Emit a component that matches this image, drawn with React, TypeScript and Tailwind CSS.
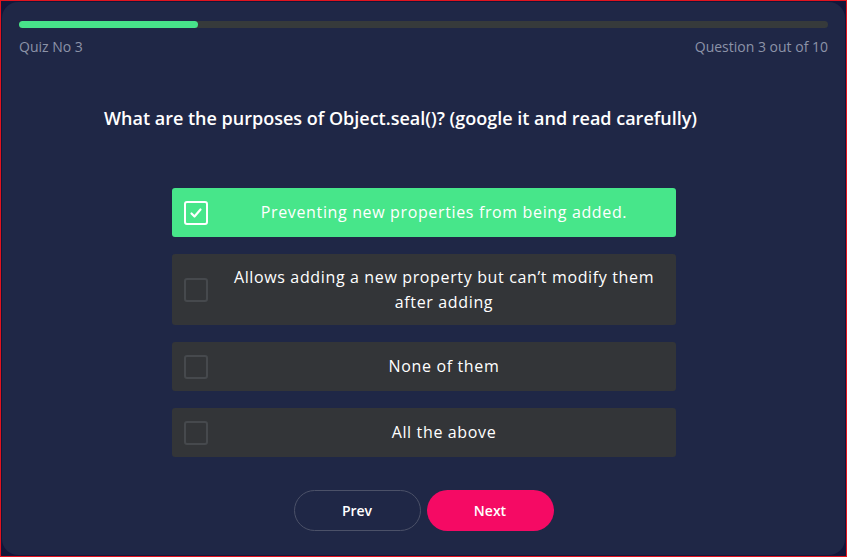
import React from 'react'

const options = [
  { text: 'Preventing new properties from being added.', checked: true },
  { text: 'Allows adding a new property but can\u2019t modify them after adding', checked: false },
  { text: 'None of them', checked: false },
  { text: 'All the above', checked: false },
]

function Checkbox({ checked }: { checked: boolean }) {
  if (checked) {
    return (
      <span className="flex h-6 w-6 shrink-0 items-center justify-center rounded-[3px] border-2 border-white">
        <svg width="14" height="14" viewBox="0 0 14 14" fill="none">
          <path d="M2.5 7.5 L5.5 10.5 L11.5 3.5" stroke="white" strokeWidth="2.2" strokeLinecap="round" strokeLinejoin="round" />
        </svg>
      </span>
    )
  }
  return <span className="block h-6 w-6 shrink-0 rounded-[3px] border-2 border-[#46494d]" />
}

export default function App() {
  return (
    <div
      className="h-[557px] w-[847px] border border-[#e0141e] bg-[#14163a] p-[1px]"
      style={{ fontFamily: '"Open Sans", "Noto Sans", sans-serif' }}
    >
      <div className="flex h-full flex-col rounded-[16px] bg-[#1f2746] px-[17px] pt-[19px]">
        <div className="h-[7px] w-full rounded-full bg-[#363a3b]">
          <div className="h-full w-[179px] rounded-full bg-[#47e38a]" />
        </div>
        <div className="mt-[8px] flex justify-between text-[14px] text-[#8c93a8]">
          <span>Quiz No 3</span>
          <span>Question 3 out of 10</span>
        </div>

        <h1 className="mt-[48px] pl-[85px] text-[18px] font-semibold text-white">
          What are the purposes of Object.seal()? (google it and read carefully)
        </h1>

        <div className="mx-auto mt-[56px] flex w-[504px] flex-col gap-[17px]">
          {options.map((o) => (
            <div
              key={o.text}
              className={
                'flex min-h-[49px] items-center rounded-[3px] py-[11px] pl-3 ' +
                (o.checked ? 'bg-[#47e68a]' : 'bg-[#333538]')
              }
            >
              <Checkbox checked={o.checked} />
              <span className="flex-1 pl-[5px] text-center text-[16px] font-medium leading-[24.5px] tracking-[0.04em] text-white">
                {o.text}
              </span>
            </div>
          ))}
        </div>

        <div className="mt-[33px] flex justify-center gap-[6px]">
          <button className="h-[41px] w-[127px] rounded-full border border-[#4b5168] text-[14px] font-semibold text-white">
            Prev
          </button>
          <button className="h-[41px] w-[127px] rounded-full bg-[#f50a64] text-[14px] font-semibold text-white">
            Next
          </button>
        </div>
      </div>
    </div>
  )
}
